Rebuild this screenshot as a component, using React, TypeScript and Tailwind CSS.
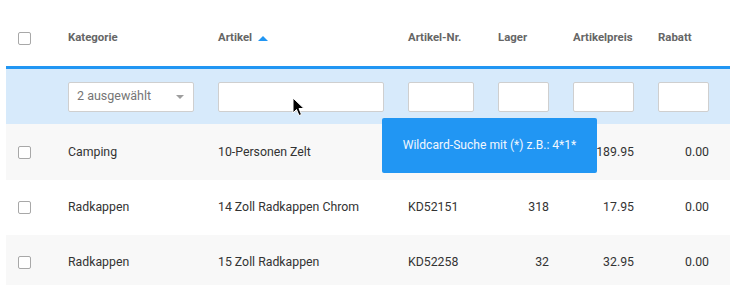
import React from 'react';

const rows = [
  // first row's Nr. and Lager sit under the tooltip
  { kategorie: 'Camping', artikel: '10-Personen Zelt', nr: '', lager: '', preis: '189.95', rabatt: '0.00' },
  { kategorie: 'Radkappen', artikel: '14 Zoll Radkappen Chrom', nr: 'KD52151', lager: '318', preis: '17.95', rabatt: '0.00' },
  { kategorie: 'Radkappen', artikel: '15 Zoll Radkappen', nr: 'KD52258', lager: '32', preis: '32.95', rabatt: '0.00' },
];

const grid = 'grid grid-cols-[26px_126px_166px_66px_51px_61px_51px] gap-x-[24px] pl-[12px] items-center';

function Checkbox() {
  return <div className="w-[13px] h-[13px] border border-[#a8a8a8] rounded-[2px] bg-white" />;
}

function FilterInput() {
  return <div className="h-[30px] bg-white border border-[#cfcfcf] rounded-[2px]" />;
}

export default function App() {
  return (
    <div className="relative w-[730px] h-[285px] overflow-hidden bg-white font-['Roboto',sans-serif]">
      <div className="ml-[6px]">
        {/* Header */}
        <div className={`${grid} h-[66px] pt-[10px] text-[11.4px] font-bold text-[#666]`}>
          <Checkbox />
          <span>Kategorie</span>
          <span className="flex items-center gap-[6px]">
            Artikel
            <svg width="10" height="5" viewBox="0 0 10 5" className="mt-[1px]">
              <path d="M0 5 L5 0 L10 5 Z" fill="#2196f3" />
            </svg>
          </span>
          <span>Artikel-Nr.</span>
          <span>Lager</span>
          <span>Artikelpreis</span>
          <span>Rabatt</span>
        </div>

        {/* Filter */}
        <div className={`${grid} h-[58px] border-t-[3px] border-[#2196f3] bg-[#d7eafb]`}>
          <div />
          <div className="h-[30px] bg-white border border-[#cfcfcf] rounded-[2px] flex items-center justify-between pl-[8px] pr-[9px] text-[12.5px] text-[#757575]">
            <span>2 ausgewählt</span>
            <svg width="8" height="4" viewBox="0 0 8 4">
              <path d="M0 0 L8 0 L4 4 Z" fill="#9e9e9e" />
            </svg>
          </div>
          <FilterInput />
          <FilterInput />
          <FilterInput />
          <FilterInput />
          <FilterInput />
        </div>

        {/* Rows */}
        {rows.map((r, i) => (
          <div
            key={i}
            className={`${grid} text-[12.3px] text-[#333] ${i === 0 ? 'h-[56px]' : 'h-[55px]'} ${
              i % 2 === 0 ? 'bg-[#f8f8f8]' : 'bg-white'
            }`}
          >
            <Checkbox />
            <span>{r.kategorie}</span>
            <span>{r.artikel}</span>
            <span>{r.nr}</span>
            <span className="text-right">{r.lager}</span>
            <span className="text-right">{r.preis}</span>
            <span className="text-right">{r.rabatt}</span>
          </div>
        ))}
      </div>

      {/* Tooltip */}
      <div className="absolute left-[382px] top-[118px] w-[215px] h-[55px] rounded-[2px] bg-[#2196f3] text-[#f1f7fe] text-[12.1px] flex items-center justify-center">
        Wildcard-Suche mit (*) z.B.: 4*1*
      </div>

      {/* Mouse cursor */}
      <svg className="absolute left-[292px] top-[97px]" width="14" height="21" viewBox="0 0 14 21">
        <path
          d="M1 1 L1 16 L4.5 12.5 L7 18.5 L9.5 17.5 L7 11.5 L12 11.5 Z"
          fill="#000"
          stroke="#fff"
          strokeWidth="1"
          strokeLinejoin="round"
        />
      </svg>
    </div>
  );
}
